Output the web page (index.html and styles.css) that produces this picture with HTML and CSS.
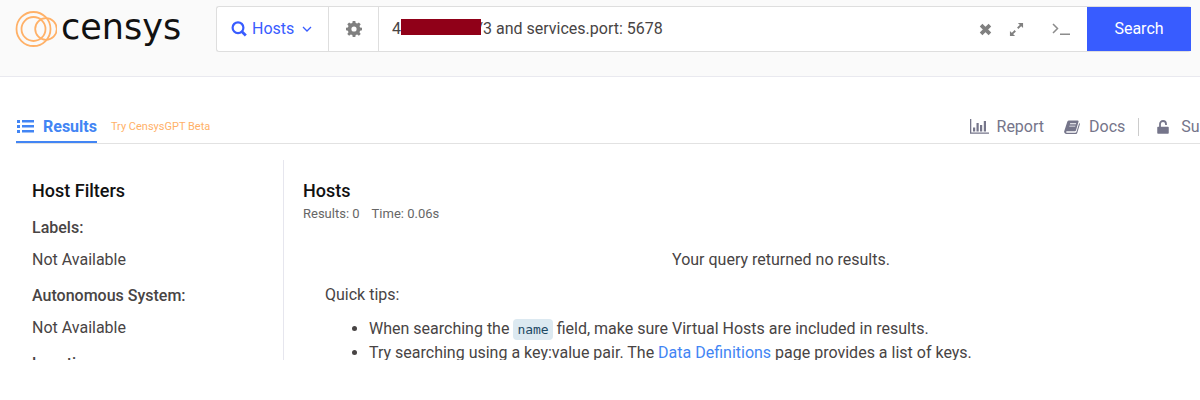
FILE: index.html
```html
<!DOCTYPE html>
<html lang="en">
<head>
    <meta charset="UTF-8">
    <meta name="viewport" content="width=device-width, initial-scale=1.0">
    <title>Hosts - Censys</title>
    <link rel="stylesheet" href="styles.css">
</head>
<body>
<div class="page">

<header class="header">
    <a class="logo" href="/">
        <svg class="logo-mark" viewBox="0 0 42 38" fill="none" stroke="#ffb168" stroke-width="1.8">
            <circle cx="18.500" cy="19" r="17"/>
            <circle cx="18.500" cy="19" r="12"/>
            <circle cx="31" cy="19" r="10.800"/>
        </svg>
        <span>censys</span>
    </a>

    <form class="search">
        <button class="search-index" type="button">
            <svg class="icon" viewBox="0 0 16 16" fill="none" stroke="currentColor" stroke-width="2.200">
                <circle cx="7" cy="6.700" r="5.400"/>
                <path d="M10.500 10.300l4.300 4.300" stroke-width="2.800"/>
            </svg>
            Hosts
            <svg class="chevron" viewBox="0 0 10 10" fill="none" stroke="currentColor" stroke-width="1.300">
                <path d="M1 3l4 4 4-4"/>
            </svg>
        </button>
        <button class="search-settings" type="button" aria-label="Settings">
            <svg class="icon" viewBox="0 0 16 16" fill="#808080">
                <path fill-rule="evenodd" d="M6.700 0h2.600l.4 2 1.500.6L12.900 1.400l1.800 1.800-1.200 1.700.6 1.500 1.900.4v2.500l-1.900.4-.6 1.500 1.200 1.700-1.800 1.800-1.700-1.200-1.500.6-.4 1.900H6.700l-.4-1.900-1.500-.6-1.700 1.200-1.800-1.800 1.200-1.700-.6-1.500L0 9.300V6.800l1.900-.4.6-1.500-1.200-1.700 1.800-1.800 1.700 1.200 1.500-.6zM8 5.400a2.600 2.600 0 1 0 0 5.200 2.600 2.600 0 0 0 0-5.200z"/>
            </svg>
        </button>
        <div class="search-field">
            <input type="text" aria-label="Search query" value="4                   /3 and services.port: 5678">
            <span class="redacted"></span>
        </div>
        <div class="search-tools">
            <button type="button" aria-label="Clear">
                <svg viewBox="0 0 16 16" stroke="#808080" stroke-width="4"><path d="M3.300 3.300l9.400 9.400M12.700 3.300l-9.400 9.400"/></svg>
            </button>
            <button type="button" aria-label="Expand">
                <svg viewBox="0 0 16 16" fill="#808080" stroke="#808080"><path d="M9.500 1H15v5.500zM1 9.500V15h5.500z" stroke="none"/><path d="M13 3L9.300 6.700M6.700 9.300L3 13" stroke-width="2"/></svg>
            </button>
            <button class="console" type="button" aria-label="Console">
                <svg viewBox="0 0 18 16" fill="none" stroke="#8c8c8c" stroke-width="1.500"><path d="M1 3l4.500 4.500L1 12M8 13.200h10"/></svg>
            </button>
        </div>
        <button class="search-submit" type="submit">Search</button>
    </form>
</header>

<div class="content">
    <nav class="tabs">
        <a class="tab-active" href="#results">
            <svg class="icon-list" viewBox="0 0 17 13" fill="currentColor">
                <path d="M0 0h3v3H0zM5 0h12v2.600H5zM0 5h3v3H0zM5 5h12v2.600H5zM0 10h3v3H0zM5 10h12v2.600H5z"/>
            </svg>
            Results
        </a>
        <a class="tab-gpt" href="#gpt">Try CensysGPT Beta</a>
        <div class="tab-links">
            <a href="#report">
                <svg class="icon-chart" viewBox="0 0 19 15" fill="currentColor">
                    <path d="M0 0h1.300v13.500H19v1.300H0zM3 8.500h2.200v4H3zM6.500 4h2.200v8.500H6.500zM10 6h2.200v6.500H10zM13.800 2H16v10.500h-2.200z"/>
                </svg>
                Report
            </a>
            <a class="docs" href="#docs">
                <svg class="icon" viewBox="0 0 16 16" fill="currentColor">
                    <path fill-rule="evenodd" d="M5.500 1.500h8c.8 0 1.200.6 1 1.300l-2.500 8.500c-.2.700-.8 1-1.500 1H3c-.8 0-1 .4-.8.900.2.400.6.500 1 .500h8c.5 0 1-.3 1.200-.8L15.200 4c.7.4.8.9.6 1.500l-2.500 8.300c-.2.800-.9 1.200-1.700 1.200H2.500C1 15-.200 13.500.2 12.200L3.200 3c.4-1.100 1.200-1.500 2.300-1.500zM6.200 4.300l-.3.900h6l.3-.9zM5.500 6.700l-.3.900h6l.3-.9z"/>
                </svg>
                Docs
            </a>
            <span class="divider"></span>
            <a href="#subscribe">
                <svg class="icon-lock" viewBox="0 0 12 14" fill="none" stroke="currentColor">
                    <path d="M3 7V4a3 3 0 0 1 6 0v1" stroke-width="1.800"/>
                    <path d="M1 7.500h10v5.500H1z" fill="currentColor" stroke-width="1.500" stroke-linejoin="round"/>
                </svg>
                Subscribe
            </a>
        </div>
    </nav>

    <div class="columns">
        <aside class="filters">
            <h2>Host Filters</h2>
            <h3>Labels:</h3>
            <p>Not Available</p>
            <h3>Autonomous System:</h3>
            <p>Not Available</p>
            <h3>Location:</h3>
        </aside>
        <main class="results">
            <h2>Hosts</h2>
            <div class="stats"><span>Results: 0</span><span>Time: 0.06s</span></div>
            <p class="empty">Your query returned no results.</p>
            <div class="tips">
                <p>Quick tips:</p>
                <ul>
                    <li>When searching the <code>name</code> field, make sure Virtual Hosts are included in results.</li>
                    <li>Try searching using a key:value pair. The <a href="#definitions">Data Definitions</a> page provides a list of keys.</li>
                </ul>
            </div>
        </main>
    </div>
</div>

</div>
</body>
</html>
```
FILE: styles.css
```css
* {
    box-sizing: border-box;
}

body {
    margin: 0;
    background: #fff;
    color: #484444;
    font: 16px/24px Roboto, sans-serif;
}

h2, h3, p, ul {
    margin: 0;
}

a {
    color: #4285f4;
    text-decoration: none;
}

button {
    border: 0;
    padding: 0;
    background: none;
    font: inherit;
    cursor: pointer;
}

svg {
    display: block;
    flex: none;
}

.page {
    height: 90vh;
    overflow: hidden;
}

.icon {
    width: 16px;
    height: 16px;
}

/* Header */
.header {
    display: flex;
    align-items: flex-start;
    padding: 6px 9px 24px 15px;
    background: #fafafa;
    border-bottom: 1px solid #e9e9ef;
}

.logo {
    display: flex;
    align-items: center;
    gap: 4px;
    width: 201px;
    height: 46px;
    color: #111;
    font: 35px/40px "DejaVu Sans", sans-serif;
}

.logo-mark {
    width: 42px;
    height: 38px;
}

.logo span {
    padding-bottom: 4px;
}

.search {
    display: flex;
    flex: 1;
    height: 46px;
    background: #fff;
    border: 1px solid #dedede;
    border-right: 0;
    border-radius: 3px;
}

.search-index {
    display: flex;
    align-items: center;
    gap: 5px;
    width: 112px;
    padding-left: 14px;
    color: #385cff;
    border-right: 1px solid #dedede;
}

.chevron {
    width: 10px;
    height: 10px;
    margin-left: 3px;
}

.search-settings {
    display: flex;
    align-items: center;
    justify-content: center;
    width: 50px;
    border-right: 1px solid #dedede;
}

.search-field {
    position: relative;
    flex: 1;
}

.search-field input {
    width: 100%;
    height: 100%;
    padding: 0 13px 2px;
    border: 0;
    outline: 0;
    background: none;
    color: #484444;
    font: inherit;
}

.redacted {
    position: absolute;
    top: 12px;
    left: 22px;
    width: 80px;
    height: 16px;
    background: #900018;
}

.search-tools {
    display: flex;
    align-items: center;
    gap: 16px;
    padding-right: 17px;
}

.search-tools svg {
    width: 15px;
    height: 15px;
}

.search-tools .console {
    margin-left: 12px;
}

.search-tools .console svg {
    width: 18px;
    height: 16px;
}

.search-submit {
    width: 104px;
    background: #385cff;
    color: #fff;
}

/* The content is wider than the window and gets clipped on the right */
.content {
    width: calc(100% + 59px);
    padding-left: 16px;
}

.tabs {
    display: flex;
    margin-top: 33px;
    height: 34px;
    border-bottom: 1px solid #e2e2e2;
}

.tab-active {
    display: flex;
    align-items: center;
    gap: 9px;
    height: 33px;
    padding: 2px 0 0 1px;
    border-bottom: 2px solid #4285f4;
    font-weight: 700;
}

.icon-list {
    width: 17px;
    height: 13px;
}

.tab-gpt {
    margin-left: 14px;
    color: #ffb168;
    font-size: 11px;
    line-height: 33px;
}

.tab-links {
    display: flex;
    align-items: center;
    height: 33px;
    margin-left: auto;
    padding-right: 7px;
}

.tab-links a {
    display: flex;
    align-items: center;
    gap: 8px;
    color: #75758a;
}

.tab-links .docs {
    gap: 9px;
    margin-left: 20px;
}

.icon-chart {
    width: 19px;
    height: 15px;
}

.icon-lock {
    width: 12px;
    height: 14px;
    margin-right: 4px;
}

.divider {
    width: 1px;
    height: 18px;
    margin: 0 18px 0 13px;
    background: #ccc;
}

/* Filters and results */
.columns {
    display: flex;
    margin-top: 16px;
}

.filters {
    width: 268px;
    padding: 19px 16px;
    border-right: 1px solid #e6e6ee;
}

h2 {
    color: #111;
    font-size: 18px;
    font-weight: 500;
}

h3 {
    margin-top: 12px;
    font-size: 16px;
    font-weight: 500;
}

.filters h2 {
    margin-bottom: 13px;
}

.filters p {
    margin-top: 8px;
}

.results {
    flex: 1;
    padding: 19px 0 0 19px;
}

.stats {
    display: flex;
    gap: 12px;
    font-size: 13px;
    line-height: 22px;
    color: #666;
}

.empty {
    margin-top: 23px;
    text-align: center;
}

.tips {
    padding: 11px 22px;
}

.tips ul {
    margin-top: 10px;
    padding-left: 44px;
}

code {
    padding: 3px 4px;
    border-radius: 4px;
    background: #dce9f1;
    color: #1d4863;
    font: 13px "DejaVu Sans Mono", monospace;
}
```
